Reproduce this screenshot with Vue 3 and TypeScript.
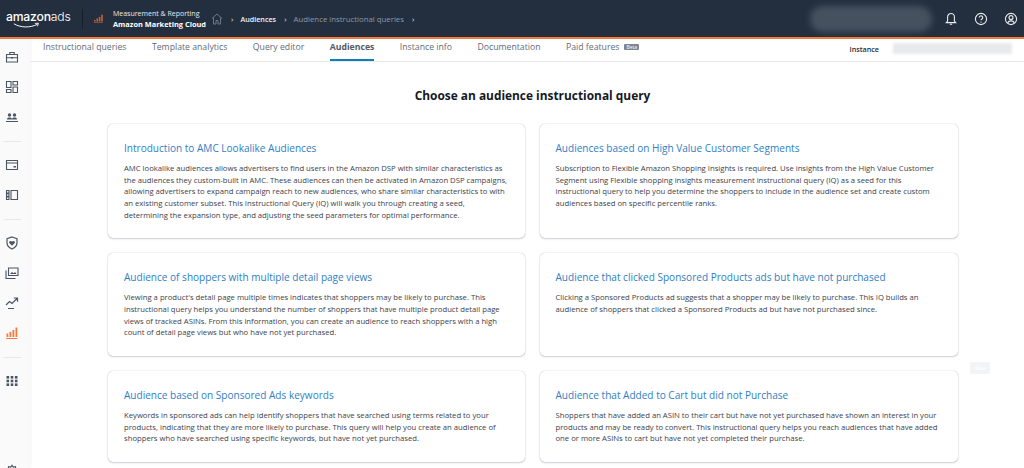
<script setup lang="ts">
interface Card { title: string; lines: string[] }

const tabs: string[] = ['Instructional queries', 'Template analytics', 'Query editor', 'Audiences', 'Instance info', 'Documentation', 'Paid features']

const cards: Card[] = [
  { title: 'Introduction to AMC Lookalike Audiences', lines: [
    'AMC lookalike audiences allows advertisers to find users in the Amazon DSP with similar characteristics as',
    'the audiences they custom-built in AMC. These audiences can then be activated in Amazon DSP campaigns,',
    'allowing advertisers to expand campaign reach to new audiences, who share similar characteristics to with',
    'an existing customer subset. This Instructional Query (IQ) will walk you through creating a seed,',
    'determining the expansion type, and adjusting the seed parameters for optimal performance.' ] },
  { title: 'Audiences based on High Value Customer Segments', lines: [
    'Subscription to Flexible Amazon Shopping Insights is required. Use insights from the High Value Customer',
    'Segment using Flexible shopping insights measurement instructional query (IQ) as a seed for this',
    'instructional query to help you determine the shoppers to include in the audience set and create custom',
    'audiences based on specific percentile ranks.' ] },
  { title: 'Audience of shoppers with multiple detail page views', lines: [
    'Viewing a product\'s detail page multiple times indicates that shoppers may be likely to purchase. This',
    'instructional query helps you understand the number of shoppers that have multiple product detail page',
    'views of tracked ASINs. From this information, you can create an audience to reach shoppers with a high',
    'count of detail page views but who have not yet purchased.' ] },
  { title: 'Audience that clicked Sponsored Products ads but have not purchased', lines: [
    'Clicking a Sponsored Products ad suggests that a shopper may be likely to purchase. This IQ builds an',
    'audience of shoppers that clicked a Sponsored Products ad but have not purchased since.' ] },
  { title: 'Audience based on Sponsored Ads keywords', lines: [
    'Keywords in sponsored ads can help identify shoppers that have searched using terms related to your',
    'products, indicating that they are more likely to purchase. This query will help you create an audience of',
    'shoppers who have searched using specific keywords, but have not yet purchased.' ] },
  { title: 'Audience that Added to Cart but did not Purchase', lines: [
    'Shoppers that have added an ASIN to their cart but have not yet purchased have shown an interest in your',
    'products and may be ready to convert. This instructional query helps you reach audiences that have added',
    'one or more ASINs to cart but have not yet completed their purchase.' ] },
]
</script>

<template>
  <div class="page">
    <header class="top">
      <div class="logo">
        <span class="logo-word"><span class="logo-a">amazon</span><span class="logo-b">ads</span></span>
        <svg class="smile" viewBox="0 0 32 7" width="32" height="7"><path d="M1 1.5C8 6 20 6.5 28 2" fill="none" stroke="#fff" stroke-width="1.1"/><path d="M25 1.2l4-.4-1 3.6" fill="none" stroke="#fff" stroke-width="1"/></svg>
      </div>
      <div class="divider"></div>
      <svg class="app-icon" viewBox="0 0 10 9" width="10" height="9"><path d="M0 6h1.6v1.6H0zM2.4 4.5H4v3.1H2.400zM4.800 3h1.600v4.600H4.800zM7.200.8h1.600v6.800H7.200z" fill="#c8623a"/><path d="M0 8.200h8.800v.6H0z" fill="#c8623a"/></svg>
      <div class="app-name">
        <span class="app-sup">Measurement &amp; Reporting</span>
        <span class="app-main">Amazon Marketing Cloud</span>
      </div>
      <nav class="crumbs">
        <svg class="home" viewBox="0 0 12 12" width="12" height="12"><path d="M1 5.500L6 1l5 4.500M2.500 4.500V11h2.500V7.500h2V11h2.500V4.500" fill="none" stroke="#7d8998" stroke-width=".8"/></svg>
        <span class="sep">›</span>
        <span class="crumb-on">Audiences</span>
        <span class="sep">›</span>
        <span class="crumb-off">Audience instructional queries</span>
        <span class="sep">›</span>
      </nav>
      <div class="blur-pill"></div>
      <div class="actions">
        <svg viewBox="0 0 14 14" width="14" height="14"><path d="M7 1.500a3.400 3.400 0 0 0-3.400 3.400V9L2.300 10.600h9.400L10.400 9V4.900A3.400 3.400 0 0 0 7 1.500zM5.800 12.300h2.400" fill="none" stroke="#e8eaed" stroke-width="1.100"/></svg>
        <svg viewBox="0 0 14 14" width="14" height="14"><circle cx="7" cy="7" r="5.600" fill="none" stroke="#e8eaed" stroke-width="1.100"/><path d="M5.300 5.600a1.700 1.700 0 1 1 2.600 1.400c-.6.400-.9.700-.9 1.300" fill="none" stroke="#e8eaed" stroke-width="1.100"/><circle cx="7" cy="10.100" r=".7" fill="#e8eaed"/></svg>
        <svg viewBox="0 0 14 14" width="14" height="14"><circle cx="7" cy="7" r="5.600" fill="none" stroke="#e8eaed" stroke-width="1.100"/><circle cx="7" cy="5.600" r="2" fill="none" stroke="#e8eaed" stroke-width="1.100"/><path d="M3.600 11c.6-1.500 1.800-2.100 3.400-2.100s2.800.6 3.400 2.100" fill="none" stroke="#e8eaed" stroke-width="1.100"/></svg>
      </div>
    </header>

    <div class="body">
      <aside class="side">
        <div class="side-group">
          <svg viewBox="0 0 14 14" class="ic"><path d="M1.500 4.500h11v7.500h-11zM4.800 4.500V2.500h4.400v2M1.500 7.800h11" fill="none" stroke="#4b5563" stroke-width="1.100"/><path d="M6 7h2v1.600H6z" fill="#4b5563"/></svg>
          <svg viewBox="0 0 14 14" class="ic"><path d="M1.500 1.500h4.500v6H1.500zM8 1.500h4.500v3.500H8zM8 7h4.500v5.500H8zM1.500 9.500h4.500v3H1.500z" fill="none" stroke="#4b5563" stroke-width="1.100"/></svg>
          <svg viewBox="0 0 14 14" class="ic"><circle cx="4.500" cy="5" r="1.700" fill="#4b5563"/><circle cx="9.500" cy="5" r="1.700" fill="#4b5563"/><path d="M2 9.500c0-1.400 1-2 2.500-2s2.500.6 2.500 2zM7 9.500c0-1.400 1-2 2.500-2s2.500.6 2.500 2zM1 11h12v1H1z" fill="#4b5563"/></svg>
        </div>
        <div class="side-rule"></div>
        <div class="side-group">
          <svg viewBox="0 0 14 14" class="ic"><path d="M1.500 2.500h11v9h-11zM1.500 5h11" fill="none" stroke="#4b5563" stroke-width="1.100"/><path d="M8.500 8h2.500v1.500H8.500z" fill="#4b5563"/></svg>
          <svg viewBox="0 0 14 14" class="ic"><path d="M6 2.500h6.500v9H6zM1.500 2.500h2.500v2.500H1.500zM1.500 9h2.500v2.500H1.500zM1.500 5.800h2.500v2.400H1.500z" fill="none" stroke="#4b5563" stroke-width="1.100"/></svg>
        </div>
        <div class="side-rule"></div>
        <div class="side-group">
          <svg viewBox="0 0 14 14" class="ic"><path d="M7 1l5 1.700v4.100c0 3-2.200 5-5 6.200-2.800-1.200-5-3.200-5-6.200V2.700z" fill="none" stroke="#4b5563" stroke-width="1.200"/><path d="M7 9.800L4.300 7c-1-1.400 1-3 2.700-1.400C8.700 4 10.700 5.600 9.700 7z" fill="#4b5563"/></svg>
          <svg viewBox="0 0 14 14" class="ic"><path d="M3.500 2h9.500v7.500H3.500z" fill="none" stroke="#4b5563" stroke-width="1.100"/><path d="M1 4.500v8h9.500" fill="none" stroke="#4b5563" stroke-width="1.100"/><path d="M5 8l2-2 1.500 1.200L10 6l1.500 2z" fill="#4b5563"/></svg>
          <svg viewBox="0 0 14 14" class="ic"><path d="M1 9l3.500-3.500 2.500 2L12 2.500M8.800 2H12.500v3.700M3 12.500h6" fill="none" stroke="#4b5563" stroke-width="1.200"/></svg>
          <svg viewBox="0 0 14 14" class="ic"><path d="M1.500 7.500h1.800v3.500H1.500zM4.500 6h1.800v5H4.500zM7.500 4h1.800v7H7.500zM10.500 1.500h1.800V11h-1.800zM1 12h11.500v1H1z" fill="#f47b3b"/></svg>
        </div>
        <div class="side-rule"></div>
        <div class="side-group">
          <svg viewBox="0 0 14 14" class="ic"><g fill="#4b5563"><rect x="1.500" y="2" width="2.600" height="2.600"/><rect x="5.700" y="2" width="2.600" height="2.600"/><rect x="9.900" y="2" width="2.600" height="2.600"/><rect x="1.500" y="5.700" width="2.600" height="2.600"/><rect x="5.700" y="5.700" width="2.600" height="2.600"/><rect x="9.900" y="5.700" width="2.600" height="2.600"/><rect x="1.500" y="9.400" width="2.600" height="2.600"/><rect x="5.700" y="9.400" width="2.600" height="2.600"/><rect x="9.900" y="9.400" width="2.600" height="2.600"/></g></svg>
        </div>
        <svg viewBox="0 0 14 14" class="ic gear"><circle cx="7" cy="7" r="2" fill="none" stroke="#4b5563" stroke-width="1.100"/><path d="M7 1.200l1.200 1.900 2.200-.5.500 2.200 1.900 1.200-1.200 1.900.6 2.200-2.300.5-1 2-1.900-1.100-1.900 1.100-1-2-2.300-.5.600-2.200L1.200 6l1.900-1.200.500-2.200 2.200.5z" fill="none" stroke="#4b5563" stroke-width="1.100"/></svg>
      </aside>

      <main class="main">
        <div class="tabbar">
          <div class="tabs">
            <div v-for="t in tabs" :key="t" class="tab" :class="{ active: t === 'Audiences' }">
              {{ t }}<span v-if="t === 'Paid features'" class="beta">Beta</span>
            </div>
          </div>
          <div class="instance">
            <span class="instance-label">Instance</span>
            <span class="instance-blur"></span>
          </div>
        </div>

        <h1 class="heading">Choose an audience instructional query</h1>

        <div class="grid">
          <article v-for="c in cards" :key="c.title" class="card">
            <h2 class="card-title">{{ c.title }}</h2>
            <p class="card-text"><span v-for="l in c.lines" :key="l" class="line">{{ l }}</span></p>
          </article>
        </div>
        <div class="ghost">Beta</div>
      </main>
    </div>
  </div>
</template>

<style>
html, body { margin: 0; background: #fff; overflow: hidden; }
</style>

<style scoped>
.page {
  width: 1024px;
  height: 468px;
  overflow: hidden;
  display: flex;
  flex-direction: column;
  font-family: "Open Sans", "Liberation Sans", sans-serif;
  color: #16191f;
}
.top {
  height: 37px;
  flex: none;
  background: #232f3e;
  border-bottom: 2px solid #f47b3b;
  display: flex;
  align-items: center;
  color: #fff;
}
.logo { width: 76px; margin-left: 6px; position: relative; height: 24px; }
.logo-word { font-size: 12.200px; line-height: 15px; display: block; margin-top: 2px; font-family: "Inter", sans-serif; letter-spacing: -0.2px; }
.logo-a { font-weight: 500; }
.logo-b { font-weight: 300; }
.smile { position: absolute; left: 7px; top: 15px; width: 28px; }
.divider { width: 1px; height: 20px; background: #161e28; margin-right: 11px; }
.app-icon { margin-right: 9px; }
.app-name { display: flex; flex-direction: column; font-size: 7px; line-height: 10px; width: 96px; white-space: nowrap; }
.app-sup { color: #e6e8eb; }
.app-main { font-weight: 700; font-size: 7.400px; }
.crumbs { display: flex; align-items: center; font-size: 7.200px; white-space: nowrap; margin-left: 2px; }
.sep { color: #dfe3e8; margin: 0 7px 0 8px; font-size: 8px; }
.crumb-on { color: #f1f3f5; font-weight: 600; }
.crumb-off { color: #8e99a8; font-size: 7.800px; }
.blur-pill {
  width: 122px;
  height: 26px;
  margin-left: auto;
  margin-right: 12px;
  border-radius: 13px;
  background: #465160;
  filter: blur(3px);
}
.actions { display: flex; gap: 16px; margin-right: 6px; }
.body { flex: 1; display: flex; min-height: 0; }
.side {
  width: 30px;
  flex: none;
  background: #fafafa;
  box-shadow: 1px 0 2px rgba(0, 0, 0, .05);
  display: flex;
  flex-direction: column;
  align-items: center;
  padding: 11px 6px 0 0;
  box-sizing: border-box;
}
.side-group { display: flex; flex-direction: column; gap: 16px; align-items: center; }
.ic { width: 14px; height: 14px; display: block; flex: none; }
.gear { margin-top: auto; margin-bottom: -10px; }
.side-rule { width: 17px; height: 1px; background: #e8e8e8; margin: 17px 0 16px; }
.main { flex: 1; position: relative; min-width: 0; }
.tabbar {
  height: 22px;
  border-bottom: 1px solid #e8e8e8;
  display: flex;
  justify-content: space-between;
}
.tabs { display: flex; gap: 25.500px; margin-left: 13px; }
.tab { font-size: 8.700px; line-height: 17px; color: #5f6b7a; white-space: nowrap; height: 22px; box-sizing: border-box; }
.tab.active { color: #545b64; font-weight: 700; border-bottom: 2px solid #0f7dc2; }
.beta {
  display: inline-block;
  background: #7d8590;
  color: #fff;
  font-size: 5px;
  line-height: 6px;
  padding: 0 2px;
  margin-left: 5px;
  vertical-align: 1px;
  border-radius: 1px;
}
.instance { display: flex; align-items: center; height: 19px; margin-right: 12px; }
.instance-label { font-size: 7.200px; font-weight: 600; color: #232f3e; margin-right: 14px; }
.instance-blur { width: 119px; height: 11px; background: #e8e9eb; filter: blur(1.500px); }
.heading {
  margin: 25px 0 0;
  font-size: 11.900px;
  line-height: 17px;
  font-weight: 700;
  text-align: center;
  color: #16191f;
  padding-left: 11px;
}
.grid {
  display: grid;
  grid-template-columns: 417px 418px;
  gap: 15px 14.500px;
  margin: 20px 0 0 78px;
}
.card {
  background: #fff;
  border-radius: 5px;
  box-shadow: 0 0 1px rgba(0, 22, 43, .35), 0 1px 2px rgba(0, 22, 43, .18);
  padding: 17px 16px 16.800px;
  box-sizing: border-box;
}
.card-title {
  margin: 0 0 8px;
  font-size: 10.050px;
  line-height: 14px;
  font-weight: 400;
  color: #2f7ec4;
  white-space: nowrap;
}
.card-text {
  margin: 0;
  font-size: 7.700px;
  line-height: 11.700px;
  color: #3c424b;
}
.line { display: block; white-space: nowrap; }
.ghost {
  position: absolute;
  left: 940px;
  top: 323px;
  width: 20px;
  height: 12px;
  background: #f3f4f5;
  color: #fff;
  font-size: 5px;
  line-height: 12px;
  text-align: center;
}
</style>
